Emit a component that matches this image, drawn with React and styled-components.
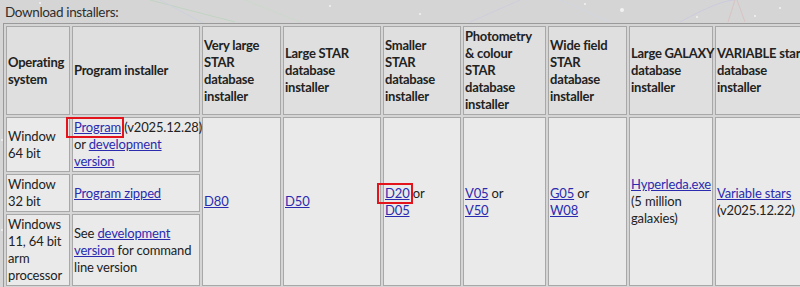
import React from 'react';
import styled, { createGlobalStyle } from 'styled-components';

const sky = encodeURIComponent(`
<svg xmlns="http://www.w3.org/2000/svg" width="800" height="287">
  <g stroke-width="1" fill="none" opacity="0.35">
    <path d="M150 0 L235 22" stroke="#9fd0a0"/>
    <path d="M160 0 L205 24" stroke="#b8c8e8"/>
    <path d="M245 0 L300 22" stroke="#b9e0b9"/>
    <path d="M520 0 L470 22" stroke="#c0c0ee"/>
    <path d="M680 22 Q720 0 735 0" stroke="#b8b8f0"/>
    <path d="M735 0 L728 22 M737 0 L745 22" stroke="#e0a0a0"/>
    <path d="M560 0 L610 22" stroke="#ccd4f0"/>
  </g>
  <g fill="#ffffff" opacity="0.7">
    <circle cx="622" cy="10" r="2"/>
    <circle cx="697" cy="17" r="1"/>
    <circle cx="755" cy="16" r="1"/>
    <circle cx="40" cy="3" r="1"/>
    <circle cx="330" cy="6" r="1"/>
    <circle cx="420" cy="14" r="1"/>
    <circle cx="585" cy="4" r="1"/>
    <circle cx="780" cy="8" r="1"/>
    <circle cx="2" cy="140" r="1"/>
    <circle cx="2" cy="230" r="1"/>
  </g>
</svg>`);

const GlobalStyle = createGlobalStyle`
  html, body {
    margin: 0;
    padding: 0;
    background-color: #d5d5d5;
    background-image: url("data:image/svg+xml,${sky}");
    background-repeat: no-repeat;
    overflow: hidden;
  }
`;

const Page = styled.div`
  padding: 2px 0 0 3px;
  font-family: Lato, "Noto Sans", sans-serif;
  font-size: 13px;
  color: #222;
`;

const Heading = styled.div`
  font-size: 13.5px;
  line-height: 20px;
  letter-spacing: -0.35px;
  color: #2e2e2e;
  margin-left: 2px;
  margin-bottom: 1px;
`;

const Table = styled.table`
  table-layout: fixed;
  width: 802px;
  border-collapse: separate;
  border-spacing: 2px;
  border: 1px solid #9a9a9a;
  border-right-color: #777;
  border-bottom-color: #777;
`;

const HeadCell = styled.th`
  background: #dfdfdf;
  border: 1px solid #a8a8a8;
  padding: 1px 0 1px 1px;
  text-align: left;
  vertical-align: middle;
  font-weight: 700;
  line-height: 17px;
  letter-spacing: -0.25px;
  white-space: nowrap;
`;

const Cell = styled.td`
  background: #eaeaea;
  border: 1px solid #a8a8a8;
  padding: 1px 0 1px 1px;
  text-align: left;
  vertical-align: middle;
  line-height: 17px;
  letter-spacing: -0.15px;
  white-space: nowrap;
`;

const Link = styled.a`
  color: #2b2bb0;
  text-decoration: underline;
  cursor: pointer;
`;

const Marked = styled.span`
  position: relative;
  &::after {
    content: '';
    position: absolute;
    left: -8px;
    right: -3px;
    top: -2px;
    bottom: -3px;
    border: 2px solid #e3141c;
    pointer-events: none;
  }
`;

const widths = [64, 128, 79, 98, 78, 83, 79, 84, 87];

const headers = [
  ['Operating', 'system'],
  ['Program installer'],
  ['Very large', 'STAR', 'database', 'installer'],
  ['Large STAR', 'database', 'installer'],
  ['Smaller', 'STAR', 'database', 'installer'],
  ['Photometry', '& colour', 'STAR', 'database', 'installer'],
  ['Wide field', 'STAR', 'database', 'installer'],
  ['Large GALAXY', 'database', 'installer'],
  ['VARIABLE star', 'database', 'installer'],
];

const Lines = ({ lines }) =>
  lines.map((l, i) => (
    <React.Fragment key={i}>
      {i > 0 && <br />}
      {l}
    </React.Fragment>
  ));

export default function App() {
  return (
    <>
      <GlobalStyle />
      <Page>
        <Heading>Download installers:</Heading>
        <Table>
          <colgroup>
            {widths.map((w, i) => <col key={i} style={{ width: w }} />)}
          </colgroup>
          <thead>
            <tr>
              {headers.map(h => (
                <HeadCell key={h.join(' ')}><Lines lines={h} /></HeadCell>
              ))}
            </tr>
          </thead>
          <tbody>
            <tr>
              <Cell><Lines lines={['Window', '64 bit']} /></Cell>
              <Cell>
                <Marked><Link>Program</Link></Marked> (v2025.12.28)<br />
                or <Link>development</Link><br />
                <Link>version</Link>
              </Cell>
              <Cell rowSpan={3}><Link>D80</Link></Cell>
              <Cell rowSpan={3}><Link>D50</Link></Cell>
              <Cell rowSpan={3}>
                <Marked><Link>D20</Link></Marked> or<br />
                <Link>D05</Link>
              </Cell>
              <Cell rowSpan={3}><Link>V05</Link> or<br /><Link>V50</Link></Cell>
              <Cell rowSpan={3}><Link>G05</Link> or<br /><Link>W08</Link></Cell>
              <Cell rowSpan={3}>
                <Link>Hyperleda.exe</Link><br />
                (5 million<br />
                galaxies)
              </Cell>
              <Cell rowSpan={3}>
                <Link>Variable stars</Link><br />
                (v2025.12.22)
              </Cell>
            </tr>
            <tr>
              <Cell><Lines lines={['Window', '32 bit']} /></Cell>
              <Cell><Link>Program zipped</Link></Cell>
            </tr>
            <tr>
              <Cell><Lines lines={['Windows', '11, 64 bit', 'arm', 'processor']} /></Cell>
              <Cell>
                See <Link>development</Link><br />
                <Link>version</Link> for command<br />
                line version
              </Cell>
            </tr>
          </tbody>
        </Table>
      </Page>
    </>
  );
}
